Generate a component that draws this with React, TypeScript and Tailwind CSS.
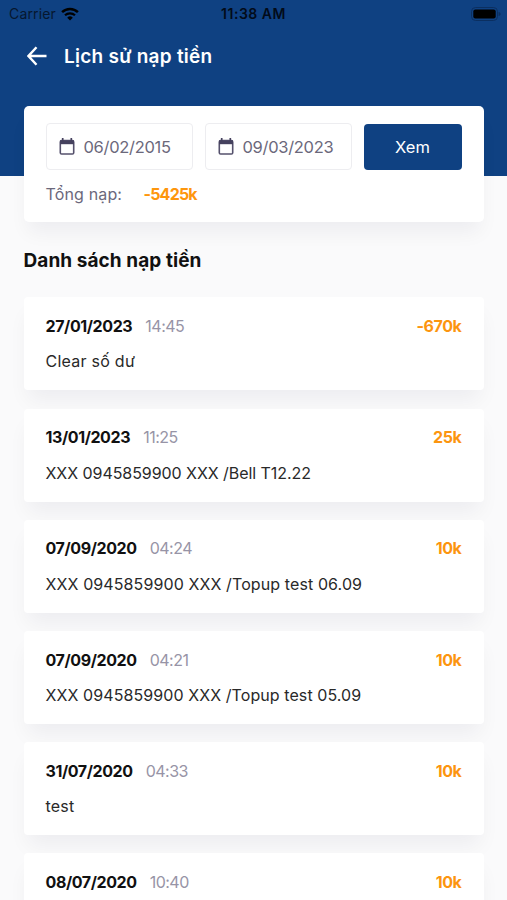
import { clsx } from 'clsx'

type Topup = {
    date: string
    time: string
    amount: string
    note: string
    noteCls?: string
}

const topups: Topup[] = [
    { date: '27/01/2023', time: '14:45', amount: '-670k', note: 'Clear số dư', noteCls: 'tracking-[0.25px]' },
    { date: '13/01/2023', time: '11:25', amount: '25k', note: 'XXX 0945859900 XXX /Bell T12.22', noteCls: 'tracking-[-0.06px]' },
    { date: '07/09/2020', time: '04:24', amount: '10k', note: 'XXX 0945859900 XXX /Topup test 06.09', noteCls: 'tracking-[0.1px]' },
    { date: '07/09/2020', time: '04:21', amount: '10k', note: 'XXX 0945859900 XXX /Topup test 05.09', noteCls: 'tracking-[0.08px]' },
    { date: '31/07/2020', time: '04:33', amount: '10k', note: 'test', noteCls: 'tracking-[0.2px]' },
    { date: '08/07/2020', time: '10:40', amount: '10k', note: '' },
]

const cardShadow = 'shadow-[0_14px_20px_-4px_rgba(20,20,50,0.055)]'

function WifiIcon() {
    return (
        <svg viewBox="0 0 18 14" className="h-[14px] w-[18px]" fill="none" stroke="#000" aria-hidden>
            <path d="M1.1 5.2a11.3 11.3 0 0 1 15.8 0" strokeWidth="2.5" />
            <path d="M4 8.3a7.2 7.2 0 0 1 10 0" strokeWidth="2.2" />
            <path d="M9 13.4 6.2 10.7a4 4 0 0 1 5.6 0Z" fill="#000" stroke="none" />
        </svg>
    )
}

function BatteryIcon() {
    return (
        <svg viewBox="0 0 30 14" className="h-[14px] w-[30px]" aria-hidden>
            <rect x="0.5" y="0.5" width="26" height="13" rx="4" fill="none" stroke="#0b2f60" />
            <rect x="2.3" y="2.5" width="22.4" height="9" rx="2" fill="#000" />
            <path d="M27.6 5v4c1.3-.4 2-1.1 2-2s-.7-1.6-2-2Z" fill="#0b2f60" />
        </svg>
    )
}

function CalendarIcon() {
    return (
        <svg viewBox="0 0 16 17" className="h-[17px] w-4 shrink-0" aria-hidden>
            <rect x="1.3" y="2.6" width="13.4" height="13.4" rx="1.3" fill="none" stroke="#55516c" strokeWidth="1.6" />
            <path d="M1 2.5h14v3.7H1Z" fill="#45415e" />
            <path d="M3.7 0v3.500M12.300 0v3.500" stroke="#45415e" strokeWidth="1.7" />
        </svg>
    )
}

function DateField({ value }: { value: string }) {
    return (
        <button
            type="button"
            className="flex h-[47px] w-[147.5px] items-center gap-[9px] rounded-[4px] border border-[#ededf0] bg-white pl-3 text-[16.5px] tracking-[-0.3px] text-[#6b687b]"
        >
            <CalendarIcon />
            <span className="pt-px">{value}</span>
        </button>
    )
}

function TopupCard({ item }: { item: Topup }) {
    return (
        <li className={clsx('h-[93px] shrink-0 rounded-[4px] bg-white px-[22px] pt-[16.6px]', cardShadow)}>
            <div className="flex h-6 items-center text-[16px]">
                <span className="font-bold tracking-[-0.4px] text-[#111]">{item.date}</span>
                <span className="ml-[13px] tracking-[-0.5px] text-[#9794a6]">{item.time}</span>
                <span className="ml-auto font-bold tracking-[-0.4px] text-[#fc950f]">{item.amount}</span>
            </div>
            <p className={clsx('mt-[11.5px] h-6 text-[16px] leading-6 text-[#292929]', item.noteCls)}>{item.note}</p>
        </li>
    )
}

export default function App() {
    return (
        <div className="h-[900px] w-[507px] overflow-hidden bg-[#fafafb] font-['Inter','Noto_Sans',sans-serif]">
            <header className="h-[176px] bg-[#0f4182]">
                <div className="grid h-[27px] grid-cols-3 items-center px-[9px] font-['Inter','Liberation_Sans',sans-serif]">
                    <div className="flex items-center gap-[5px] text-[14px] tracking-[0.15px] text-[#06172f]">
                        Carrier
                        <WifiIcon />
                    </div>
                    <div className="text-center text-[14px] font-semibold tracking-[0.5px] text-[#020b19]">11:38 AM</div>
                    <div className="-mr-[3px] flex justify-end">
                        <BatteryIcon />
                    </div>
                </div>
                <div className="flex h-[59px] items-center gap-[17px] pl-[27px] text-white">
                    <svg viewBox="0 0 20 20" className="-mt-0.5 h-5 w-5" fill="none" stroke="currentColor" strokeWidth="2.4" aria-hidden>
                        <path d="M19.5 10H1.8M9.500 1.300 1.500 10l8 8.700" />
                    </svg>
                    <h1 className="pt-0.5 text-[19px] font-semibold tracking-[0.25px]">Lịch sử nạp tiền</h1>
                </div>
            </header>

            <main className="px-[23.5px]">
                <section className={clsx('relative -mt-[70px] h-[116px] rounded-[5px] bg-white px-[22px] pt-[17px]', cardShadow)}>
                    <div className="flex items-center gap-[11.5px]">
                        <DateField value="06/02/2015" />
                        <DateField value="09/03/2023" />
                        <button type="button" className="h-[46px] flex-1 rounded-[4px] bg-[#0f4182] pt-px text-[16.5px] text-white">
                            Xem
                        </button>
                    </div>
                    <div className="mt-3 flex h-6 items-center text-[16px]">
                        <span className="w-[98px] tracking-[0.15px] text-[#6b687b]">Tổng nạp:</span>
                        <span className="font-bold tracking-[-0.8px] text-[#fe960c]">-5425k</span>
                    </div>
                </section>

                <h2 className="mt-[25px] h-7 text-[19px] leading-7 font-bold tracking-[0.07px] text-[#111]">Danh sách nạp tiền</h2>
                <ul className="mt-[22.4px] flex flex-col gap-[18.2px]">
                    {topups.map((t, i) => (
                        <TopupCard key={i} item={t} />
                    ))}
                </ul>
            </main>
        </div>
    )
}
